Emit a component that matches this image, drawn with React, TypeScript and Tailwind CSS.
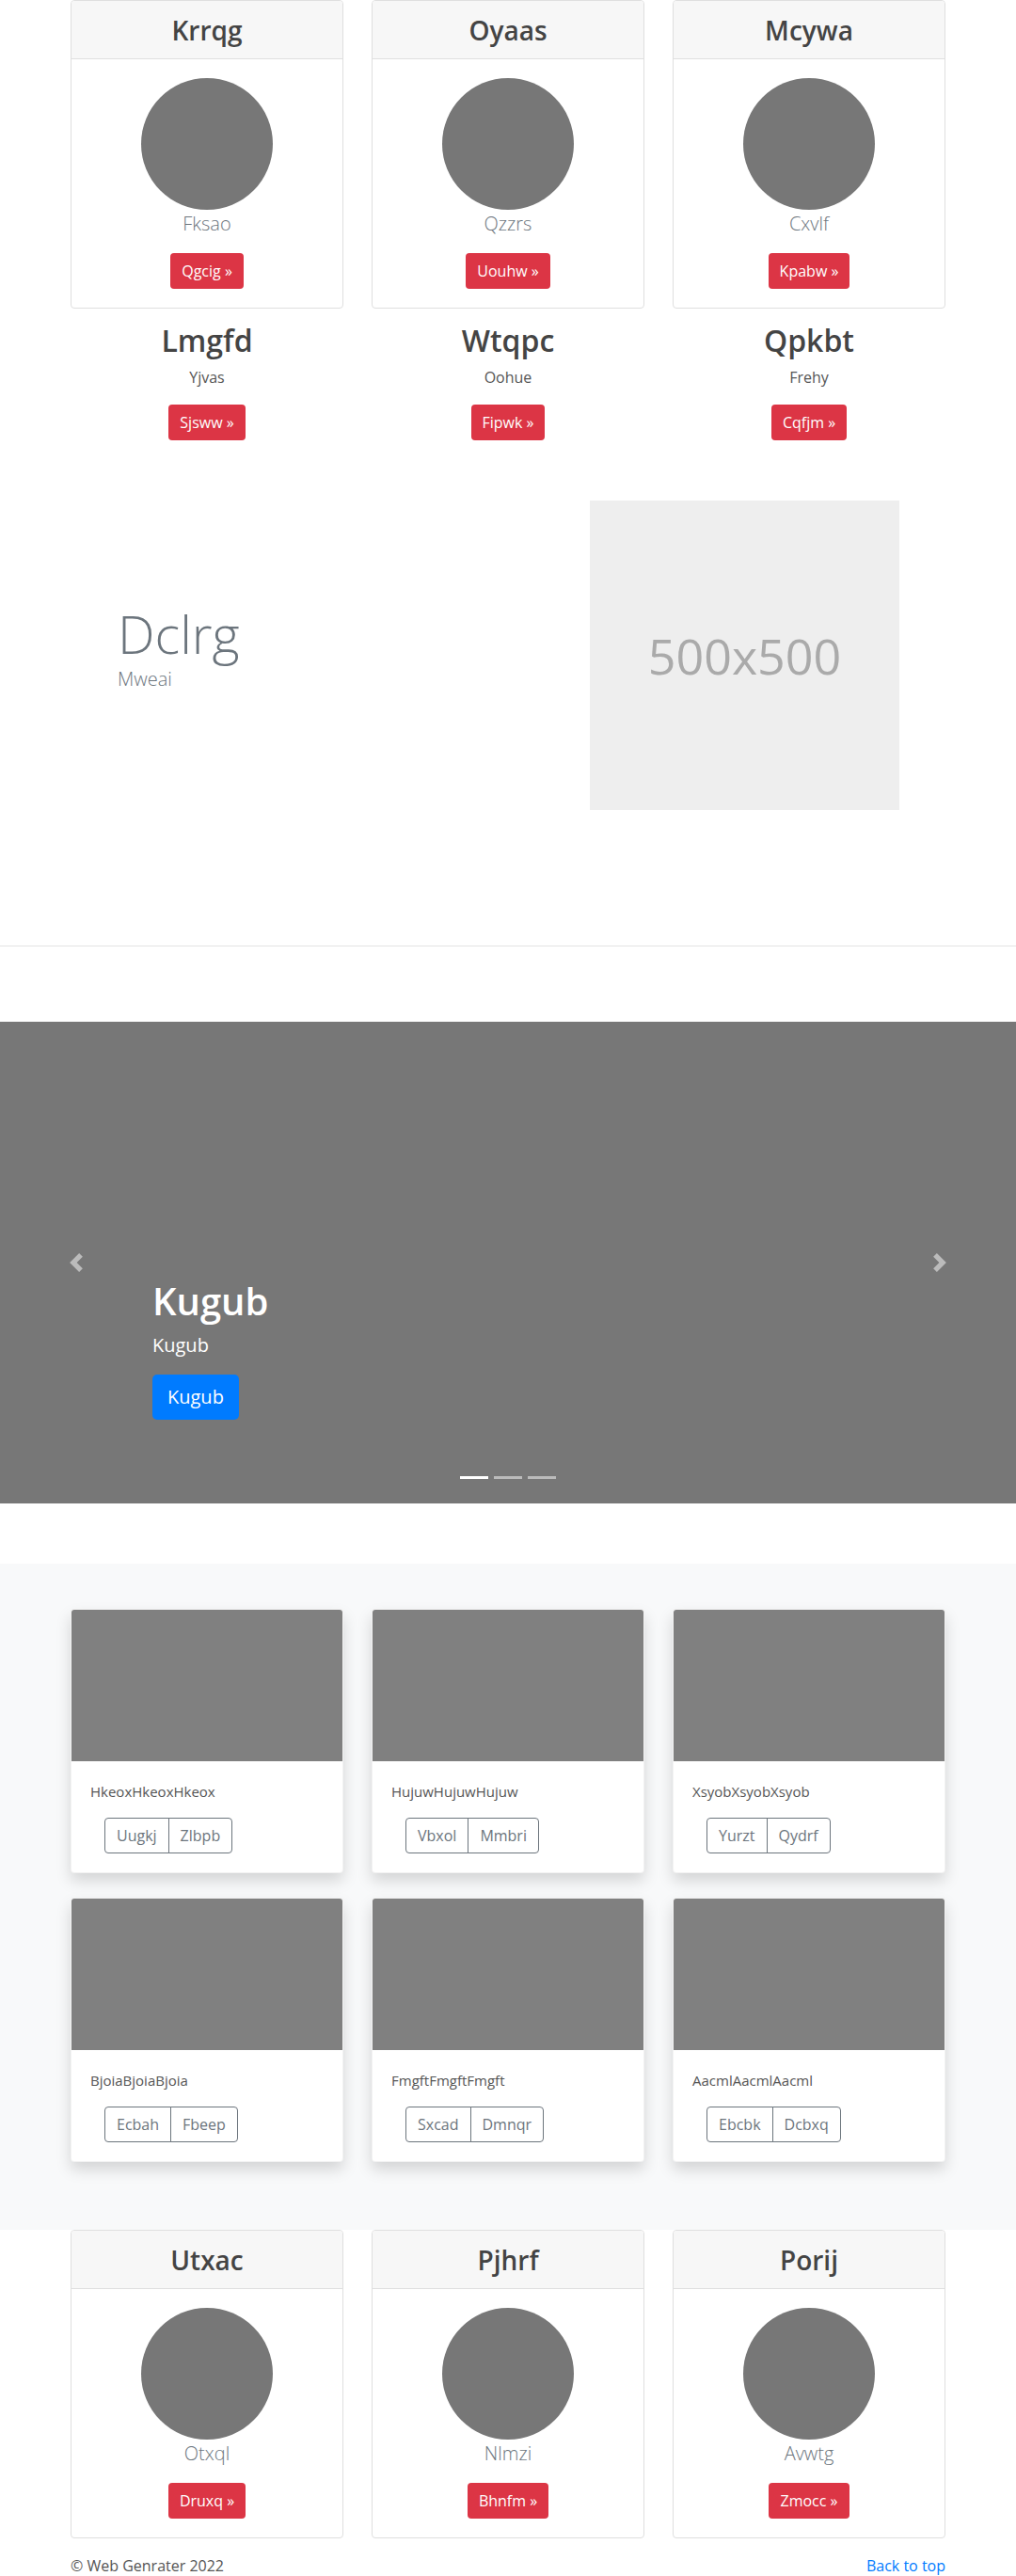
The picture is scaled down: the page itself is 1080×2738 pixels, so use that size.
import React from "react";

type Pc = { title: string; name: string; btn: string };

const topCards: Pc[] = [
  { title: "Krrqg", name: "Fksao", btn: "Qgcig" },
  { title: "Oyaas", name: "Qzzrs", btn: "Uouhw" },
  { title: "Mcywa", name: "Cxvlf", btn: "Kpabw" },
];

const bottomCards: Pc[] = [
  { title: "Utxac", name: "Otxql", btn: "Druxq" },
  { title: "Pjhrf", name: "Nlmzi", btn: "Bhnfm" },
  { title: "Porij", name: "Avwtg", btn: "Zmocc" },
];

const cols = [
  { h: "Lmgfd", p: "Yjvas", b: "Sjsww" },
  { h: "Wtqpc", p: "Oohue", b: "Fipwk" },
  { h: "Qpkbt", p: "Frehy", b: "Cqfjm" },
];

const album = [
  { t: "HkeoxHkeoxHkeox", a: "Uugkj", b: "Zlbpb" },
  { t: "HujuwHujuwHujuw", a: "Vbxol", b: "Mmbri" },
  { t: "XsyobXsyobXsyob", a: "Yurzt", b: "Qydrf" },
  { t: "BjoiaBjoiaBjoia", a: "Ecbah", b: "Fbeep" },
  { t: "FmgftFmgftFmgft", a: "Sxcad", b: "Dmnqr" },
  { t: "AacmlAacmlAacml", a: "Ebcbk", b: "Dcbxq" },
];

function RedBtn({ label }: { label: string }) {
  return (
    <span className="inline-block bg-[#dc3545] text-white text-[16px] leading-6 px-3 py-[7px] rounded-[4px]">
      {label} »
    </span>
  );
}

function ProfileCard({ c }: { c: Pc }) {
  return (
    <div className="border border-[#dfdfdf] rounded-[4px] bg-white overflow-hidden">
      <div className="h-[62px] bg-[#f7f7f7] border-b border-[#dfdfdf] flex items-center justify-center">
        <h3 className="text-[28px] font-semibold text-[#444] leading-none">{c.title}</h3>
      </div>
      <div className="flex flex-col items-center pt-5 pb-5">
        <div className="w-[140px] h-[140px] rounded-full bg-[#777]" />
        <p className="text-[20px] font-light leading-[30px] text-[#6c757d] mb-4">{c.name}</p>
        <RedBtn label={c.btn} />
      </div>
    </div>
  );
}

function Chevron({ dir }: { dir: "l" | "r" }) {
  return (
    <svg width="20" height="20" viewBox="0 0 8 8" fill="#fff">
      {dir === "l" ? (
        <path d="M5.25 0l-4 4 4 4 1.5-1.5-2.5-2.5 2.5-2.5-1.5-1.5z" />
      ) : (
        <path d="M2.75 0l-1.5 1.5 2.5 2.5-2.5 2.5 1.5 1.5 4-4-4-4z" />
      )}
    </svg>
  );
}

export default function App() {
  return (
    <div className="w-full bg-white font-['Open_Sans',sans-serif] text-[#444]">
      {/* top profile cards */}
      <div className="w-[930px] mx-auto grid grid-cols-3 gap-x-[30px]">
        {topCards.map((c) => (
          <ProfileCard key={c.title} c={c} />
        ))}
      </div>

      {/* text columns */}
      <div className="w-[930px] mx-auto grid grid-cols-3 gap-x-[30px] mt-[15px]">
        {cols.map((c) => (
          <div key={c.h} className="flex flex-col items-center">
            <h2 className="text-[32px] font-semibold leading-[38px] text-[#444] mb-2">{c.h}</h2>
            <p className="text-[16px] leading-6 text-[#555] mb-[17px]">{c.p}</p>
            <RedBtn label={c.b} />
          </div>
        ))}
      </div>

      {/* featurette */}
      <div className="w-[960px] mx-auto flex items-start mt-[64px]">
        <div className="flex-1 pl-[65px] pt-[106px]">
          <h2 className="text-[56px] font-light leading-[70px] text-[#6c757d]">Dclrg</h2>
          <p className="text-[20px] font-light leading-[28px] text-[#6c757d]">Mweai</p>
        </div>
        <div className="w-[329px] h-[329px] mr-[64px] bg-[#eeeeee] flex items-center justify-center">
          <span className="text-[52px] text-[#aaaaaa] leading-none">500x500</span>
        </div>
      </div>

      <hr className="mt-[144px] border-0 border-t border-[#e3e3e3]" />

      {/* carousel */}
      <div className="relative mt-[80px] h-[512px] bg-[#777777]">
        <div className="absolute left-0 top-0 bottom-0 w-[15%] flex items-center justify-center opacity-50">
          <Chevron dir="l" />
        </div>
        <div className="absolute right-0 top-0 bottom-0 w-[15%] flex items-center justify-center opacity-50">
          <Chevron dir="r" />
        </div>
        <div className="absolute left-[162px] bottom-[89px] flex flex-col items-start text-white">
          <h1 className="text-[40px] font-semibold leading-[48px] mb-2">Kugub</h1>
          <p className="text-[20px] font-medium leading-[30px] mb-4">Kugub</p>
          <span className="inline-block bg-[#007bff] text-white text-[20px] leading-[30px] px-4 py-[9px] rounded-[5px]">
            Kugub
          </span>
        </div>
        <div className="absolute left-0 right-0 bottom-[26px] flex justify-center gap-[6px]">
          <span className="w-[30px] h-[3px] bg-white" />
          <span className="w-[30px] h-[3px] bg-white/50" />
          <span className="w-[30px] h-[3px] bg-white/50" />
        </div>
      </div>

      {/* album */}
      <div className="mt-[64px] bg-[#f8f9fa] pt-[48px] pb-[72px]">
        <div className="w-[930px] mx-auto grid grid-cols-3 gap-x-[30px] gap-y-[26px]">
          {album.map((a) => (
            <div
              key={a.t}
              className="bg-white rounded-[4px] overflow-hidden shadow-[0_8px_16px_rgba(0,0,0,0.15)] border border-black/5"
            >
              <div className="h-[161px] bg-[#808080]" />
              <div className="p-5">
                <p className="text-[15px] leading-6 text-[#555] mb-4">{a.t}</p>
                <div className="ml-[15px] inline-flex">
                  <span className="border border-[#6c757d] text-[#6c757d] text-[16px] leading-6 px-3 py-[6px] rounded-l-[4px]">
                    {a.a}
                  </span>
                  <span className="border border-[#6c757d] -ml-px text-[#6c757d] text-[16px] leading-6 px-3 py-[6px] rounded-r-[4px]">
                    {a.b}
                  </span>
                </div>
              </div>
            </div>
          ))}
        </div>
      </div>

      {/* bottom profile cards */}
      <div className="w-[930px] mx-auto grid grid-cols-3 gap-x-[30px]">
        {bottomCards.map((c) => (
          <ProfileCard key={c.title} c={c} />
        ))}
      </div>

      {/* footer */}
      <div className="w-[930px] mx-auto flex justify-between mt-[17px] text-[16px] leading-6">
        <p className="text-[#555]">© Web Genrater 2022</p>
        <p className="text-[#007bff]">Back to top</p>
      </div>
    </div>
  );
}
